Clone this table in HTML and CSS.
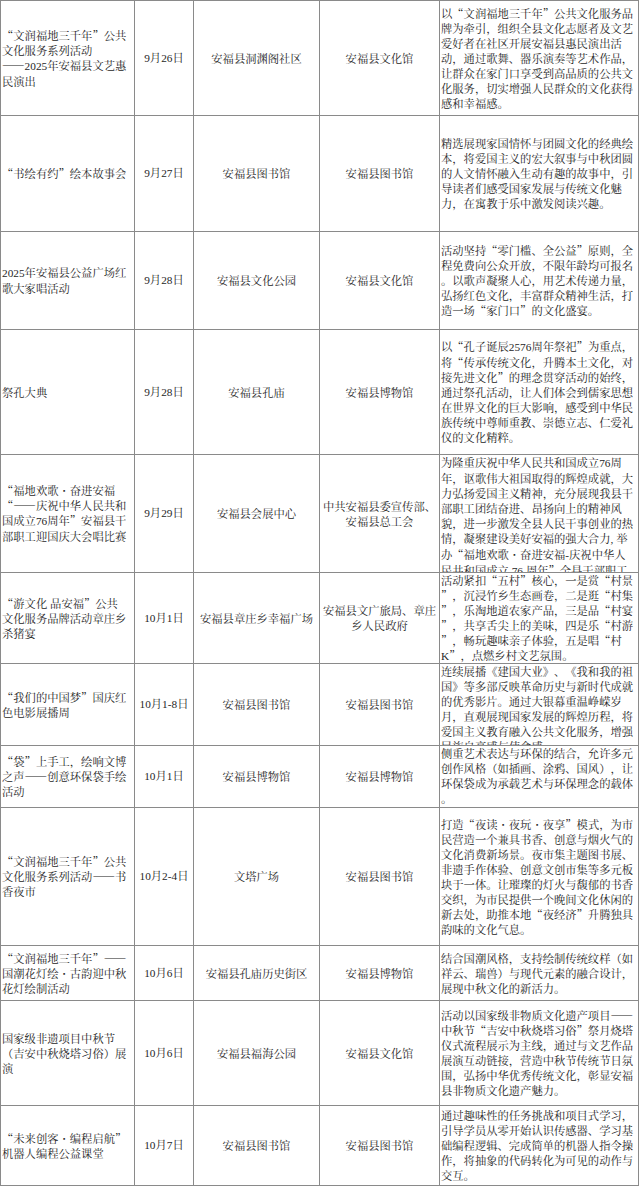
FILE: index.html
```html
<!DOCTYPE html>
<html lang="zh-CN">
<head>
<meta charset="utf-8">
<title>活动安排</title>
<link rel="stylesheet" href="styles.css">
</head>
<body>
<div class="sheet">
  <div class="c"><p>“文润福地三千年”公共<br>文化服务系列活动<br>——<span class="n">2025</span>年安福县文艺惠<br>民演出</p></div>
  <div class="c ctr d"><p>9月26日</p></div>
  <div class="c ctr"><p>安福县洞渊阁社区</p></div>
  <div class="c ctr"><p>安福县文化馆</p></div>
  <div class="c"><p>以“文润福地三千年”公共文化服务品<br>牌为牵引，组织全县文化志愿者及文艺<br>爱好者在社区开展安福县惠民演出活<br>动，通过歌舞、器乐演奏等艺术作品，<br>让群众在家门口享受到高品质的公共文<br>化服务，切实增强人民群众的文化获得<br>感和幸福感。</p></div>

  <div class="c"><p>“书绘有约”绘本故事会</p></div>
  <div class="c ctr d"><p>9月27日</p></div>
  <div class="c ctr"><p>安福县图书馆</p></div>
  <div class="c ctr"><p>安福县图书馆</p></div>
  <div class="c"><p>精选展现家国情怀与团圆文化的经典绘<br>本，将爱国主义的宏大叙事与中秋团圆<br>的人文情怀融入生动有趣的故事中，引<br>导读者们感受国家发展与传统文化魅<br>力，在寓教于乐中激发阅读兴趣。</p></div>

  <div class="c"><p><span class="n">2025</span>年安福县公益广场红<br>歌大家唱活动</p></div>
  <div class="c ctr d"><p>9月28日</p></div>
  <div class="c ctr"><p>安福县文化公园</p></div>
  <div class="c ctr"><p>安福县文化馆</p></div>
  <div class="c"><p>活动坚持“零门槛、全公益”原则，全<br>程免费向公众开放，不限年龄均可报名<br>。以歌声凝聚人心，用艺术传递力量，<br>弘扬红色文化，丰富群众精神生活，打<br>造一场“家门口”的文化盛宴。</p></div>

  <div class="c"><p>祭孔大典</p></div>
  <div class="c ctr d"><p>9月28日</p></div>
  <div class="c ctr"><p>安福县孔庙</p></div>
  <div class="c ctr"><p>安福县博物馆</p></div>
  <div class="c"><p>以“孔子诞辰<span class="n">2576</span>周年祭祀”为重点，<br>将“传承传统文化，升腾本土文化，对<br>接先进文化”的理念贯穿活动的始终，<br>通过祭孔活动，让人们体会到儒家思想<br>在世界文化的巨大影响，感受到中华民<br>族传统中尊师重教、崇德立志、仁爱礼<br>仪的文化精粹。</p></div>

  <div class="c"><p>“福地欢歌<span class="dot">·</span>奋进安福<br>“——庆祝中华人民共和<br>国成立<span class="n">76</span>周年”安福县干<br>部职工迎国庆大会唱比赛</p></div>
  <div class="c ctr d"><p>9月29日</p></div>
  <div class="c ctr"><p>安福县会展中心</p></div>
  <div class="c ctr"><p>中共安福县委宣传部、<br>安福县总工会</p></div>
  <div class="c top"><p>为隆重庆祝中华人民共和国成立<span class="n">76</span>周<br>年，讴歌伟大祖国取得的辉煌成就，大<br>力弘扬爱国主义精神，充分展现我县干<br>部职工团结奋进、昂扬向上的精神风<br>貌，进一步激发全县人民干事创业的热<br>情，凝聚建设美好安福的强大合力<span class="n">, </span>举<br>办“福地欢歌<span class="dot">·</span>奋进安福<span class="n">-</span>庆祝中华人<br>民共和国成立 <span class="n">76</span> 周年”全县干部职工<br>迎国庆大会唱比赛。</p></div>

  <div class="c"><p>“游文化 品安福”公共<br>文化服务品牌活动章庄乡<br>杀猪宴</p></div>
  <div class="c ctr d"><p>10月1日</p></div>
  <div class="c ctr"><p>安福县章庄乡幸福广场</p></div>
  <div class="c ctr"><p>安福县文广旅局、章庄<br>乡人民政府</p></div>
  <div class="c top"><p>活动紧扣“五村”核心，一是赏“村景<br>”，沉浸竹乡生态画卷，二是逛“村集<br>”，乐淘地道农家产品，三是品“村宴<br>”，共享舌尖上的美味，四是乐“村游<br>”，畅玩趣味亲子体验，五是唱“村<br><span class="n">K</span>”，点燃乡村文艺氛围。</p></div>

  <div class="c"><p>“我们的中国梦”国庆红<br>色电影展播周</p></div>
  <div class="c ctr d"><p>10月1-8日</p></div>
  <div class="c ctr"><p>安福县图书馆</p></div>
  <div class="c ctr"><p>安福县图书馆</p></div>
  <div class="c top"><p>连续展播《建国大业》、《我和我的祖<br>国》等多部反映革命历史与新时代成就<br>的优秀影片。通过大银幕重温峥嵘岁<br>月，直观展现国家发展的辉煌历程，将<br>爱国主义教育融入公共文化服务，增强<br>民族自豪感与使命感。</p></div>

  <div class="c"><p>“袋”上手工，绘响文博<br>之声——创意环保袋手绘<br>活动</p></div>
  <div class="c ctr d"><p>10月1日</p></div>
  <div class="c ctr"><p>安福县博物馆</p></div>
  <div class="c ctr"><p>安福县博物馆</p></div>
  <div class="c top"><p>侧重艺术表达与环保的结合，允许多元<br>创作风格（如插画、涂鸦、国风），让<br>环保袋成为承载艺术与环保理念的载体<br>。</p></div>

  <div class="c"><p>“文润福地三千年”公共<br>文化服务系列活动——书<br>香夜市</p></div>
  <div class="c ctr d"><p>10月2-4日</p></div>
  <div class="c ctr"><p>文塔广场</p></div>
  <div class="c ctr"><p>安福县图书馆</p></div>
  <div class="c"><p>打造“夜读<span class="dot">·</span>夜玩<span class="dot">·</span>夜享”模式，为市<br>民营造一个兼具书香、创意与烟火气的<br>文化消费新场景。夜市集主题图书展、<br>非遗手作体验、创意文创市集等多元板<br>块于一体。让璀璨的灯火与馥郁的书香<br>交织，为市民提供一个晚间文化休闲的<br>新去处，助推本地“夜经济”升腾独具<br>韵味的文化气息。</p></div>

  <div class="c"><p>“文润福地三千年”——<br>国潮花灯绘<span class="dot">·</span>古韵迎中秋<br>花灯绘制活动</p></div>
  <div class="c ctr d"><p>10月6日</p></div>
  <div class="c ctr"><p>安福县孔庙历史街区</p></div>
  <div class="c ctr"><p>安福县博物馆</p></div>
  <div class="c"><p>结合国潮风格，支持绘制传统纹样（如<br>祥云、瑞兽）与现代元素的融合设计，<br>展现中秋文化的新活力。</p></div>

  <div class="c"><p>国家级非遗项目中秋节<br>（吉安中秋烧塔习俗）展<br>演</p></div>
  <div class="c ctr d"><p>10月6日</p></div>
  <div class="c ctr"><p>安福县福海公园</p></div>
  <div class="c ctr"><p>安福县文化馆</p></div>
  <div class="c"><p>活动以国家级非物质文化遗产项目——<br>中秋节“吉安中秋烧塔习俗”祭月烧塔<br>仪式流程展示为主线，通过与文艺作品<br>展演互动链接，营造中秋节传统节日氛<br>围，弘扬中华优秀传统文化，彰显安福<br>县非物质文化遗产魅力。</p></div>

  <div class="c"><p>“未来创客<span class="dot">·</span>编程启航”<br>机器人编程公益课堂</p></div>
  <div class="c ctr d"><p>10月7日</p></div>
  <div class="c ctr"><p>安福县图书馆</p></div>
  <div class="c ctr"><p>安福县图书馆</p></div>
  <div class="c"><p>通过趣味性的任务挑战和项目式学习，<br>引导学员从零开始认识传感器、学习基<br>础编程逻辑、完成简单的机器人指令操<br>作，将抽象的代码转化为可见的动作与<br>交互。</p></div>
</div>
</body>
</html>
```

FILE: styles.css
```css
html, body {
  margin: 0;
  padding: 0;
  background: #ffffff;
}

body {
  font-family: "Noto Serif CJK SC", "Noto Sans CJK SC", sans-serif;
  font-size: 11.3px;
  line-height: 15px;
  color: #262626;
  text-spacing-trim: space-all;
}

.sheet {
  display: grid;
  grid-template-columns: 134px 59px 126px 120px 199px;
  grid-template-rows: 115px 116px 98px 125px 118px 91px 82px 62px 138px 55px 105px 80px;
  width: fit-content;
  border-left: 1px solid #8a8a8a;
  border-top: 1px solid #8a8a8a;
}

.c {
  display: flex;
  flex-direction: column;
  justify-content: center;
  overflow: hidden;
  padding: 0 1px;
  border-right: 1px solid #8a8a8a;
  border-bottom: 1px solid #8a8a8a;
}

.c p {
  margin: 0;
  white-space: nowrap;
  flex: none;
}

.ctr p {
  text-align: center;
}

.top {
  justify-content: flex-start;
}

.d p,
.n {
  font-family: "Liberation Serif", "Noto Serif CJK SC", "Noto Sans CJK SC", serif;
}

.dot {
  display: inline-block;
  width: 1em;
  text-align: center;
  font-weight: bold;
}
```
